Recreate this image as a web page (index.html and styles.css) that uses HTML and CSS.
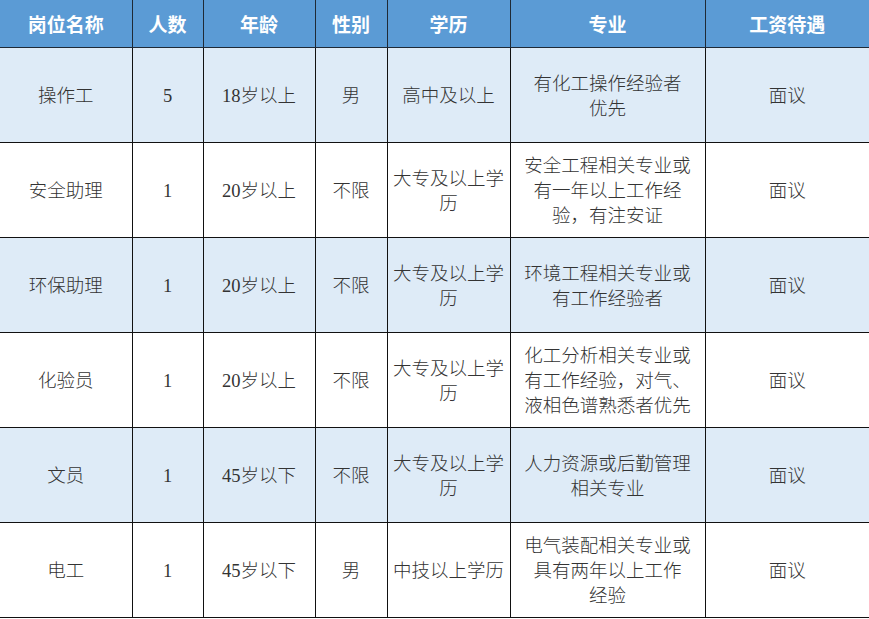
FILE: index.html
```html
<!DOCTYPE html>
<html lang="zh">
<head>
<meta charset="utf-8">
<link rel="stylesheet" href="styles.css">
</head>
<body>
<table class="jobs">
  <colgroup>
    <col class="c1"><col class="c2"><col class="c3"><col class="c4"><col class="c5"><col class="c6"><col class="c7">
  </colgroup>
  <thead>
    <tr><th>岗位名称</th><th>人数</th><th>年龄</th><th>性别</th><th>学历</th><th>专业</th><th>工资待遇</th></tr>
  </thead>
  <tbody>
    <tr class="alt"><td>操作工</td><td>5</td><td>18岁以上</td><td>男</td><td>高中及以上</td><td>有化工操作经验者<br>优先</td><td>面议</td></tr>
    <tr><td>安全助理</td><td>1</td><td>20岁以上</td><td>不限</td><td>大专及以上学<br>历</td><td>安全工程相关专业或<br>有一年以上工作经<br>验，有注安证</td><td>面议</td></tr>
    <tr class="alt"><td>环保助理</td><td>1</td><td>20岁以上</td><td>不限</td><td>大专及以上学<br>历</td><td>环境工程相关专业或<br>有工作经验者</td><td>面议</td></tr>
    <tr><td>化验员</td><td>1</td><td>20岁以上</td><td>不限</td><td>大专及以上学<br>历</td><td>化工分析相关专业或<br>有工作经验，对气、<br>液相色谱熟悉者优先</td><td>面议</td></tr>
    <tr class="alt"><td>文员</td><td>1</td><td>45岁以下</td><td>不限</td><td>大专及以上学<br>历</td><td>人力资源或后勤管理<br>相关专业</td><td>面议</td></tr>
    <tr><td>电工</td><td>1</td><td>45岁以下</td><td>男</td><td>中技以上学历</td><td>电气装配相关专业或<br>具有两年以上工作<br>经验</td><td>面议</td></tr>
  </tbody>
</table>
</body>
</html>
```
FILE: styles.css
```css
html, body {
  margin: 0;
  padding: 0;
  background: #ffffff;
}
.jobs {
  width: 869px;
  table-layout: fixed;
  border-collapse: collapse;
  font-family: "Liberation Serif", "Noto Sans CJK SC", serif;
  color: #333333;
}
.c1 { width: 132px; }
.c2 { width: 71px; }
.c3 { width: 112px; }
.c4 { width: 72px; }
.c5 { width: 123px; }
.c6 { width: 195px; }
.c7 { width: 164px; }
.jobs th {
  height: 47px;
  background: #5b9bd5;
  color: #ffffff;
  font-family: "Noto Sans CJK SC", sans-serif;
  font-size: 19px;
  font-weight: 700;
  padding: 0;
  border-left: 1.5px solid #1f2a36;
  border-bottom: 1.5px solid #1f2a36;
  text-align: center;
  vertical-align: middle;
}
.jobs td {
  height: 91px;
  padding: 3px 2px 0;
  font-size: 18.5px;
  font-weight: 300;
  line-height: 25px;
  text-align: center;
  vertical-align: middle;
  border-left: 1.5px solid #111;
  border-bottom: 1.5px solid #111;
}
.jobs th:first-child,
.jobs td:first-child {
  border-left: none;
}
.jobs tr.alt td {
  background: #deebf7;
}
```
